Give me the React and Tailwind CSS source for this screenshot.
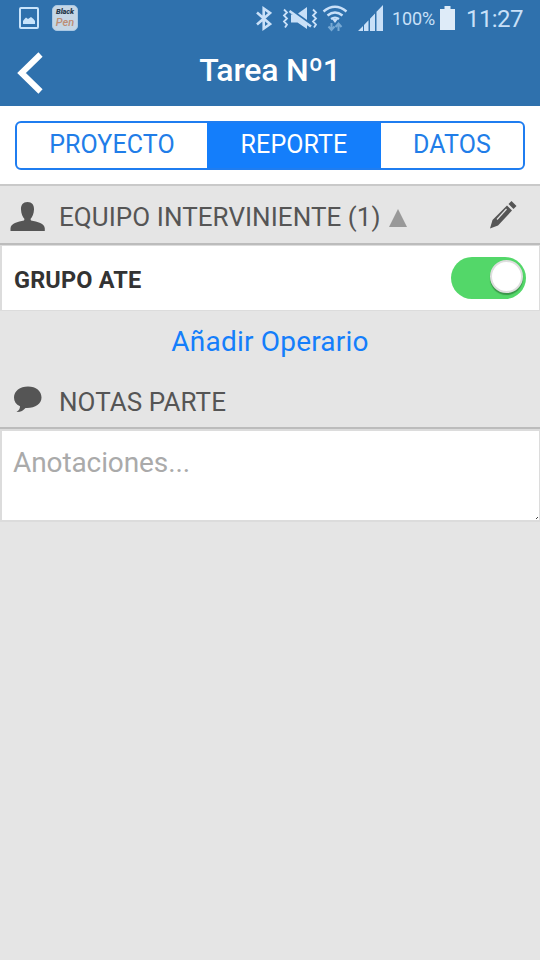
import React from 'react';

function StatusBar() {
  return (
    <div className="h-9 flex items-center text-[#c9e0f8]">
      <svg className="ml-[19px] w-5 h-[22px]" viewBox="0 0 20 22" fill="none">
        <rect x="1" y="1" width="18" height="20" rx="1" stroke="#c9e4fb" strokeWidth="2" />
        <path d="M4 17v-3l1.500-2 1.500-1.500 2 1.500 3-2 2.500 2L16 14v3z" fill="#c9e4fb" />
      </svg>
      <div className="ml-[13px] w-[26px] h-[26px] rounded-[5px] bg-[#c5d6e5] border border-[#a9c8e4] flex flex-col items-center pt-px italic">
        <span className="text-[7.500px] leading-[9px] tracking-[-0.1px] font-black text-[#26394c]">Black</span>
        <span className="text-[11px] leading-[13px] font-medium text-[#bd8d74]">Pen</span>
      </div>
      <svg className="ml-[178px] w-4 h-[25px]" viewBox="0 0 16 25" fill="none" stroke="currentColor" strokeWidth="2.6">
        <path d="M1 6.500l13 11.500-6.300 4.500V2.500L14 7 1 18.500" />
      </svg>
      <svg className="ml-[10px] w-9 h-6" viewBox="0 0 36 24" fill="none">
        <path d="M2 3.500l3 3-3 3 3 3-3 3 3 3-2 3M31 3.500l3 3-3 3 3 3-3 3 3 3-2 3" stroke="currentColor" strokeWidth="1.8" />
        <path d="M16 7.500L25 1v13z" fill="currentColor" />
        <path d="M9 8.500h3l13 9.500v5l-9.500-6.500H9z" fill="currentColor" />
        <path d="M7.500 5l21.500 15.500" stroke="currentColor" strokeWidth="2.6" />
      </svg>
      <svg className="ml-1 w-[26px] h-[27px]" viewBox="0 0 26 27" fill="none">
        <path d="M1.500 6.500q11.500-9.500 23 0M5.500 10.500q7.500-6 15 0M9 14q4-2.800 8 0" stroke="currentColor" strokeWidth="2.4" />
        <path d="M10 14h6l-3 4z" fill="currentColor" />
        <path d="M9.500 18v6.500M6.500 21.500l3 3.500 3-3.500M16.500 26v-7M13.500 22l3-3.500 3 3.500" stroke="#77a9d4" strokeWidth="2" />
      </svg>
      <svg className="ml-[10px] w-[25px] h-[26px]" viewBox="0 0 25 26" fill="currentColor">
        <path d="M0 26l5-5v5zM6 20l4.500-4.700V26H6zM12 13.700l5-5.200V26h-5zM18.500 6.800L25 0v26h-6.500z" />
      </svg>
      <span className="ml-[9px] w-[44px] text-[18px] tracking-[-0.1px] whitespace-nowrap pt-px">100%</span>
      <svg className="ml-1 mb-px w-[15px] h-6" viewBox="0 0 15 24" fill="#deebf8">
        <path d="M4.500 0h6v3H15v21H0V3h4.500z" />
      </svg>
      <span className="ml-[11px] pt-px text-[24px] tracking-[-0.6px] whitespace-nowrap">11:27</span>
    </div>
  );
}

function TitleBar() {
  return (
    <div className="relative h-[70px] text-white">
      <svg className="absolute left-[17px] top-4 w-[26px] h-[42px]" viewBox="0 0 26 42" fill="none">
        <path d="M23.500 2.500L4.500 21l19 18.500" stroke="currentColor" strokeWidth="6" />
      </svg>
      <h1 className="text-center text-[32px] tracking-[-0.2px] font-medium leading-[68px]">Tarea Nº1</h1>
    </div>
  );
}

function Tabs() {
  return (
    <div className="h-20 bg-white border-b-2 border-[#c9c9c9] pt-[15px] px-[15px]">
      <div className="h-[49px] flex rounded-md border-2 border-[#1f7df0] overflow-hidden text-[25px] leading-[43px] tracking-[0.1px] text-center text-[#217de8]">
        <div className="w-[190px]">PROYECTO</div>
        <div className="w-[174px] bg-[#147efb] text-white">REPORTE</div>
        <div className="flex-1">DATOS</div>
      </div>
    </div>
  );
}

export default function App() {
  return (
    <div className="w-[540px] h-[960px] bg-[#e5e5e5] font-['Roboto',sans-serif] overflow-hidden">
      <header className="h-[106px] bg-[#2f71ad]">
        <StatusBar />
        <TitleBar />
      </header>
      <Tabs />

      <div className="h-[59px] flex items-start border-b-2 border-[#bcbcbc] text-[#555]">
        <svg className="ml-[10px] mt-[15px] w-[35px] h-[31px]" viewBox="0 0 35 31" fill="currentColor">
          <path d="M17.500 1c-4.500 0-6.700 3-6.500 7.500.2 4 1.500 7.500 3.500 9.500l-.5 1.500C8 20.500 .5 22.500 .5 27.500V30h34.300v-2.500c0-5-7.500-7-13.800-8l-.5-1.500c2-2 3.300-5.500 3.500-9.500C24.200 4 22 1 17.500 1z" />
        </svg>
        <h2 className="ml-[14px] text-[26px] leading-[62px] tracking-[0.06px] whitespace-nowrap">EQUIPO INTERVINIENTE (1)</h2>
        <svg className="ml-2 mt-[23px] w-[18px] h-[18px]" viewBox="0 0 18 18" fill="#999">
          <path d="M9 0l9 18H0z" />
        </svg>
        <svg className="ml-auto mr-[23px] mt-[14px] w-[28px] h-[29px]" viewBox="0 0 28 29">
          <path d="M18 5.500l5 5L9 25.500 1 28.500 3.500 20z" fill="currentColor" />
          <path d="M19.500 4l3-3 5 5-3 3z" fill="currentColor" />
          <path d="M17.500 9L8 19.500" stroke="#e5e5e5" strokeWidth="1.200" />
        </svg>
      </div>

      <div className="h-[66px] bg-white border-t border-l-2 border-r border-b border-[#dcdcdc] flex items-center justify-between pl-3 pr-[13px]">
        <span className="text-[23.500px] tracking-[0.15px] font-bold text-[#333] pt-[5px]">GRUPO ATE</span>
        <div className="w-[75px] h-[42px] rounded-full bg-[#53d769] flex justify-end pr-[3px] pt-[3px]">
          <div className="w-[33px] h-[33px] rounded-full bg-white border-2 border-[#dedede] shadow-[0_2px_1px_rgba(0,0,0,0.3)]" />
        </div>
      </div>

      <div className="h-[61px] text-center text-[28px] tracking-[0.2px] leading-[61px] text-[#147efb]">Añadir Operario</div>

      <div className="h-[57px] flex items-start border-b-2 border-[#bcbcbc] text-[#555]">
        <svg className="ml-[13px] mt-[14px] w-[29px] h-[27px]" viewBox="0 0 29 27" fill="currentColor">
          <path d="M15 0.500C7 0.500 1 5 1 11.500c0 4 2 7 6 8.800 0 2.500-1 4-3.500 5.700 4 .2 7-1.500 9-4 9.500.5 16-4 16-10.500S23 .5 15 .5z" />
        </svg>
        <h2 className="ml-[17px] text-[26px] leading-[60px] tracking-[0.06px] whitespace-nowrap">NOTAS PARTE</h2>
      </div>

      <div className="relative h-[93px] bg-white border-2 border-r border-[#dcdcdc] pl-[11px] text-[28px] tracking-[-0.1px] leading-[64px] text-[#aaa]">
        Anotaciones...
        <svg className="absolute right-0 bottom-0 w-1 h-1" viewBox="0 0 4 4" fill="#444">
          <path d="M2 1h1v1H2zM1 2h1v1H1z" />
        </svg>
      </div>
    </div>
  );
}
